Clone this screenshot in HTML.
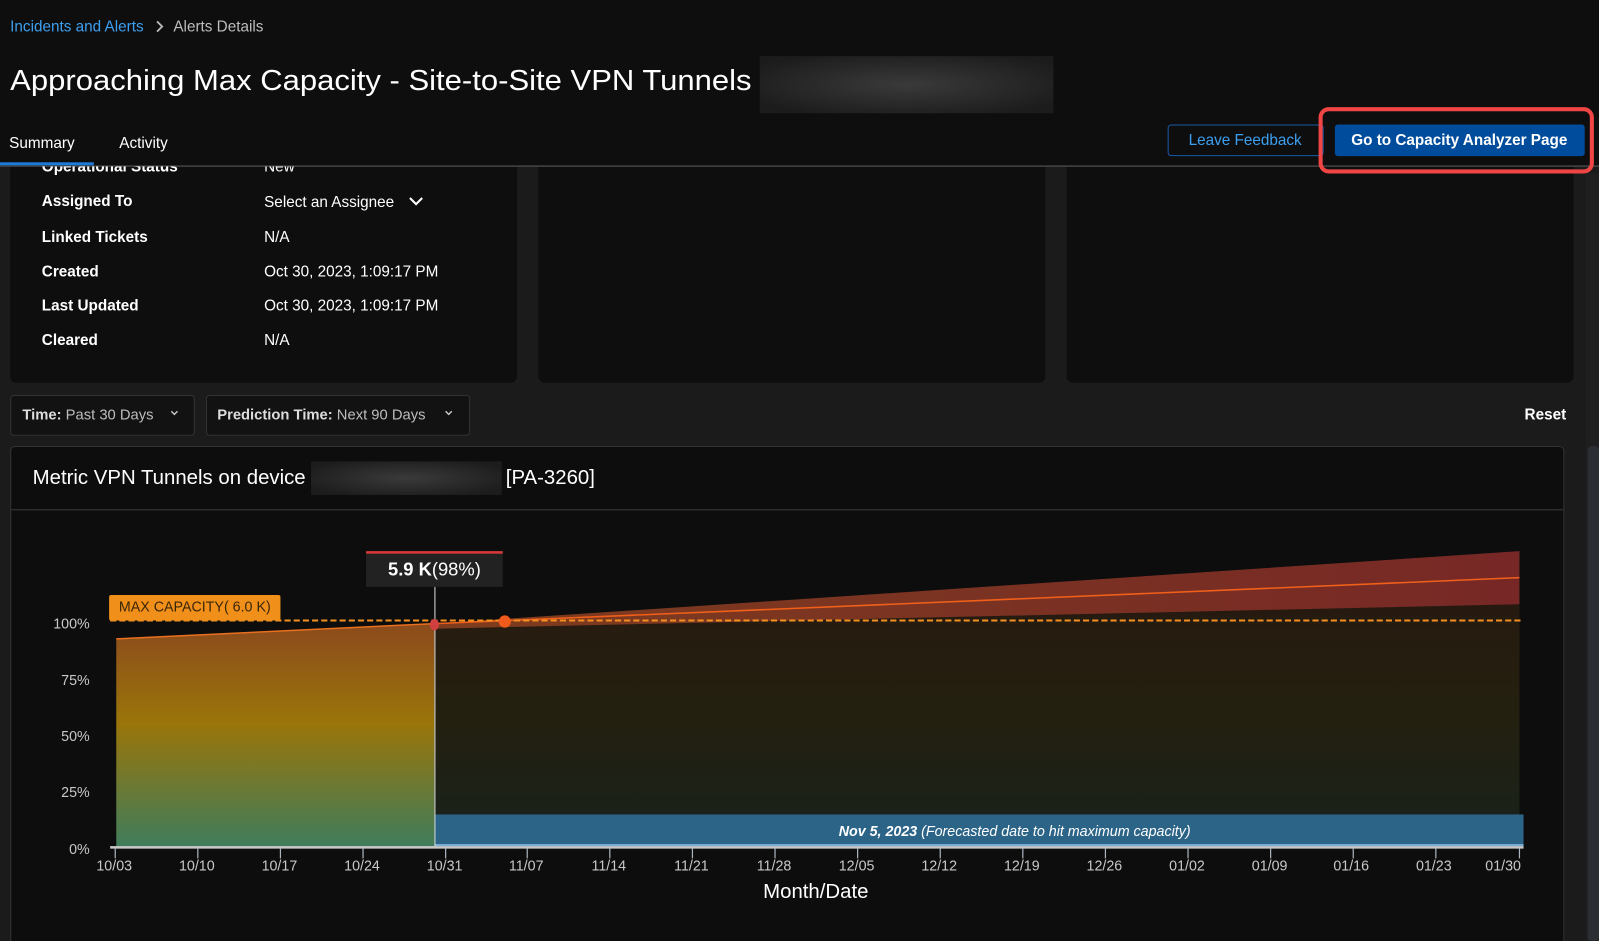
<!DOCTYPE html>
<html><head><meta charset="utf-8"><style>
html,body{margin:0;padding:0;background:#0d0d0d;overflow:hidden}
svg{display:block}
text{font-family:"Liberation Sans",sans-serif}
</style></head><body>
<svg width="1599" height="941" viewBox="0 0 1568 922" preserveAspectRatio="none" xmlns="http://www.w3.org/2000/svg">
<defs>
<linearGradient id="hist" x1="0" y1="0" x2="0" y2="1">
<stop offset="0" stop-color="#8c4a1c"/><stop offset="0.45" stop-color="#9a750a"/><stop offset="1" stop-color="#3f7d5c"/></linearGradient>
<linearGradient id="fc" x1="0" y1="0" x2="0" y2="1">
<stop offset="0" stop-color="#261a10"/><stop offset="0.5" stop-color="#24200f"/><stop offset="1" stop-color="#1b2119"/></linearGradient>
<linearGradient id="band" x1="0" y1="0" x2="1" y2="0">
<stop offset="0" stop-color="#7e3c1e"/><stop offset="1" stop-color="#772826"/></linearGradient>
<radialGradient id="blur" cx="0.5" cy="0.5" r="0.6"><stop offset="0" stop-color="#3a3a3a"/><stop offset="1" stop-color="#1c1c1c"/></radialGradient>
</defs>
<rect width="1568" height="922" fill="#1b1b1b"/>
<rect x="10" y="150" width="497" height="225" rx="6" fill="#0e0e0e"/>
<rect x="528" y="150" width="497" height="225" rx="6" fill="#0e0e0e"/>
<rect x="1046" y="150" width="497" height="225" rx="6" fill="#0e0e0e"/>
<rect width="1568" height="162" fill="#0e0e0e"/>
<text x="10" y="31" font-size="15" fill="#3d9ff0">Incidents and Alerts</text>
<path d="M154 21l5 5-5 5" stroke="#bbb" stroke-width="1.8" fill="none"/>
<text x="170" y="31" font-size="15" fill="#bdbdbd">Alerts Details</text>
<text x="10" y="88" font-size="28.5" fill="#fff" textLength="727" lengthAdjust="spacingAndGlyphs">Approaching Max Capacity - Site-to-Site VPN Tunnels</text>
<rect x="745" y="55" width="288" height="56" fill="url(#blur)"/>
<text x="9" y="145" font-size="15" fill="#fff">Summary</text>
<text x="117" y="145" font-size="15" fill="#fff">Activity</text>
<rect x="0" y="162" width="1568" height="1.5" fill="#444"/>
<rect x="0" y="159" width="92" height="3" fill="#1e7ad8"/>
<rect x="1145.5" y="122.5" width="152" height="30" rx="3" fill="none" stroke="#1a5aa8"/>
<text x="1221" y="142" font-size="15" fill="#3d9ff0" text-anchor="middle">Leave Feedback</text>
<rect x="1309" y="122" width="245" height="31" rx="3" fill="#004c9c"/>
<text x="1431" y="142" font-size="15" font-weight="bold" fill="#fff" text-anchor="middle">Go to Capacity Analyzer Page</text>
<rect x="1295" y="107" width="266" height="61" rx="8" fill="none" stroke="#f04545" stroke-width="4"/>
<svg x="0" y="163" width="1290" height="30" overflow="hidden"><text x="41" y="5" font-size="15" font-weight="bold" fill="#fff">Operational Status</text><text x="259" y="5" font-size="15" fill="#fff">New</text></svg>
<g font-size="15" fill="#fff">
<text x="41" y="202" font-weight="bold">Assigned To</text><text x="259" y="203">Select an Assignee</text>
<path d="M402 194l6 6 6-6" stroke="#fff" stroke-width="2" fill="none"/>
<text x="41" y="237" font-weight="bold">Linked Tickets</text><text x="259" y="237">N/A</text>
<text x="41" y="271" font-weight="bold">Created</text><text x="259" y="271">Oct 30, 2023, 1:09:17 PM</text>
<text x="41" y="304" font-weight="bold">Last Updated</text><text x="259" y="304">Oct 30, 2023, 1:09:17 PM</text>
<text x="41" y="338" font-weight="bold">Cleared</text><text x="259" y="338">N/A</text>
</g>
<rect x="10.5" y="387.5" width="180" height="39" rx="3" fill="#121212" stroke="#333"/>
<text x="22" y="411" font-size="14.5" fill="#bdbdbd"><tspan font-weight="bold" fill="#ddd">Time:</tspan> Past 30 Days</text>
<path d="M168 403l3 3 3-3" stroke="#ccc" stroke-width="1.4" fill="none"/>
<rect x="202.5" y="387.5" width="258" height="39" rx="3" fill="#121212" stroke="#333"/>
<text x="213" y="411" font-size="14.5" fill="#bdbdbd"><tspan font-weight="bold" fill="#ddd">Prediction Time:</tspan> Next 90 Days</text>
<path d="M437 403l3 3 3-3" stroke="#ccc" stroke-width="1.4" fill="none"/>
<text x="1495" y="411" font-size="15" font-weight="bold" fill="#fff">Reset</text>
<rect x="1555" y="170" width="13" height="752" fill="#1f1f1f"/>
<rect x="1557" y="437" width="11" height="485" rx="4" fill="#2b2f34"/>
<rect x="10.5" y="437.5" width="1523" height="490" rx="4" fill="#0d0d0d" stroke="#333"/>
<rect x="11" y="499" width="1522" height="1" fill="#3a3a3a"/>
<text x="32" y="474" font-size="20" fill="#fff">Metric VPN Tunnels on device</text>
<rect x="305" y="452" width="187" height="33" fill="url(#blur)"/>
<text x="496" y="474" font-size="20" fill="#fff">[PA-3260]</text>
<polygon points="114,626 426,611 426,830 114,830" fill="url(#hist)"/>
<line x1="114" y1="626" x2="426" y2="611" stroke="#e8701e" stroke-width="1.5"/>
<polygon points="426,614 1490,592 1490,798 426,798" fill="url(#fc)"/>
<polygon points="426,611 1490,540 1490,592 426,616" fill="url(#band)"/>
<line x1="426" y1="611" x2="1490" y2="566" stroke="#f0601a" stroke-width="1.5"/>
<rect x="426" y="798" width="1068" height="30" fill="#2c6488"/>
<rect x="426" y="827" width="1068" height="2" fill="#7ab0d8"/>
<text x="995" y="819" font-size="14" font-style="italic" fill="#fff" text-anchor="middle"><tspan font-weight="bold">Nov 5, 2023</tspan> (Forecasted date to hit maximum capacity)</text>
<line x1="108" y1="608" x2="1493" y2="608" stroke="#f39020" stroke-width="2" stroke-dasharray="6 3"/>
<rect x="107" y="583" width="168" height="25" rx="2" fill="#f0901a"/>
<text x="191" y="599" font-size="14" fill="#3a2608" text-anchor="middle">MAX CAPACITY( 6.0 K)</text>
<line x1="426.5" y1="575" x2="426.5" y2="830" stroke="#ddd" stroke-width="1"/>
<rect x="359" y="540" width="134" height="35" fill="#222"/>
<rect x="359" y="540" width="134" height="2.5" fill="#d83838"/>
<text x="426" y="564" font-size="18" fill="#fff" text-anchor="middle"><tspan font-weight="bold">5.9 K</tspan>(98%)</text>
<ellipse cx="426" cy="612" rx="4.5" ry="5.5" fill="#d04040"/>
<circle cx="495" cy="609" r="6" fill="#f05a1a"/>
<rect x="108" y="829" width="1386" height="2.5" fill="#c8c8c8"/>
<g font-size="14" fill="#c8c8c8" text-anchor="end">
<text x="88" y="616">100%</text><text x="88" y="671">75%</text><text x="88" y="726">50%</text><text x="88" y="781">25%</text><text x="88" y="837">0%</text>
</g>
<g stroke="#aab4c0" stroke-width="1.2">
<path d="M113 831v10M194 831v10M275 831v10M356 831v10M437 831v10M517 831v10M598 831v10M679 831v10M760 831v10M841 831v10M922 831v10M1003 831v10M1084 831v10M1165 831v10M1246 831v10M1327 831v10M1408 831v10M1490 831v10"/>
</g>
<g font-size="14" fill="#c8c8c8" text-anchor="middle">
<text x="112" y="853">10/03</text><text x="193" y="853">10/10</text><text x="274" y="853">10/17</text><text x="355" y="853">10/24</text><text x="436" y="853">10/31</text><text x="516" y="853">11/07</text><text x="597" y="853">11/14</text><text x="678" y="853">11/21</text><text x="759" y="853">11/28</text><text x="840" y="853">12/05</text><text x="921" y="853">12/12</text><text x="1002" y="853">12/19</text><text x="1083" y="853">12/26</text><text x="1164" y="853">01/02</text><text x="1245" y="853">01/09</text><text x="1325" y="853">01/16</text><text x="1406" y="853">01/23</text><text x="1474" y="853">01/30</text>
</g>
<text x="800" y="880" font-size="20" fill="#fff" text-anchor="middle">Month/Date</text>
</svg>
</body></html>
